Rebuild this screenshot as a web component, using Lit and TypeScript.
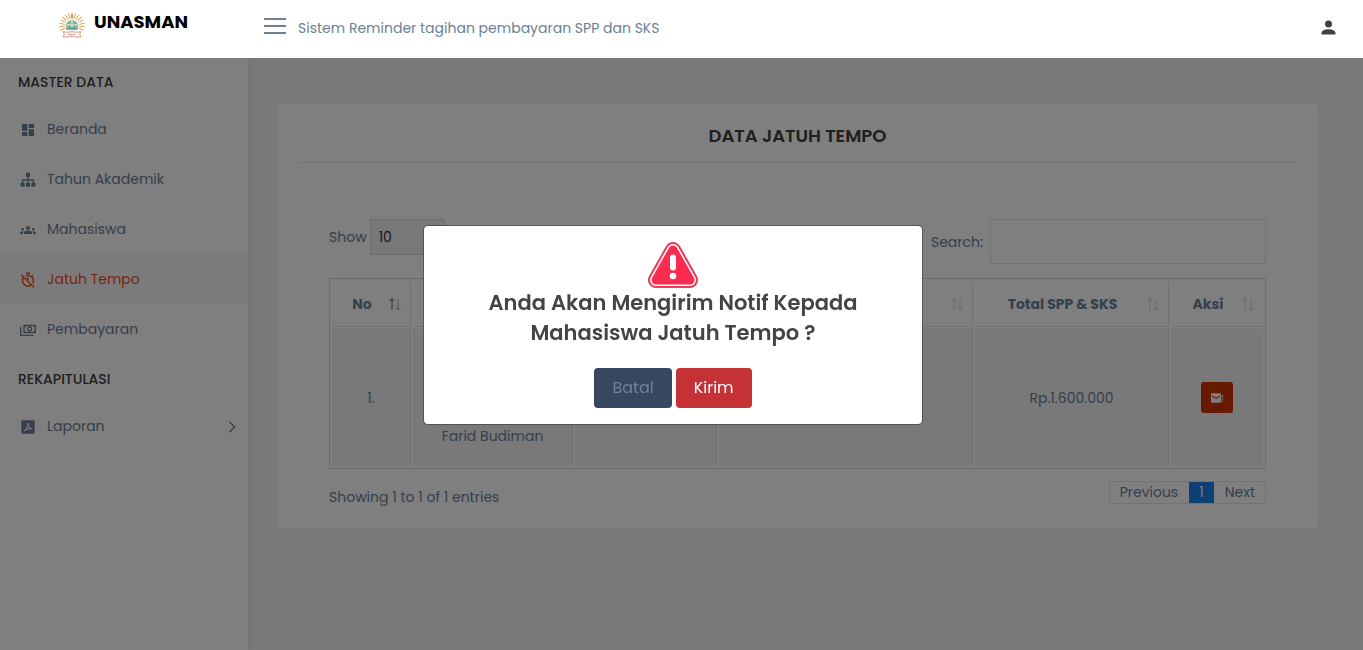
import { LitElement, html, css, svg } from "lit";
import { customElement, state } from "lit/decorators.js";
import { classMap } from "lit/directives/class-map.js";

const icons = {
  dashboard: svg`<path d="M3 13h8V3H3v10zm0 8h8v-6H3v6zm10 0h8V11h-8v10zm0-18v6h8V3h-8z" />`,
  sitemap: svg`<path d="M9 1h6v6h-2v4h8v5h2v6h-6v-6h2v-3h-6v3h2v6H9v-6h2v-3H5v3h2v6H1v-6h2v-5h8V7H9z" />`,
  people: svg`<path d="M12 12.75c1.63 0 3.07.39 4.24.9 1.08.48 1.76 1.56 1.76 2.73V18H6v-1.61c0-1.18.68-2.26 1.76-2.73 1.17-.52 2.61-.91 4.24-.91zM4 13c1.1 0 2-.9 2-2s-.9-2-2-2-2 .9-2 2 .9 2 2 2zm1.13 1.1C4.76 14.04 4.39 14 4 14c-.99 0-1.93.21-2.78.58C.48 14.9 0 15.62 0 16.43V18h4.5v-1.61c0-.83.23-1.61.63-2.29zM20 13c1.1 0 2-.9 2-2s-.9-2-2-2-2 .9-2 2 .9 2 2 2zm4 3.43c0-.81-.48-1.53-1.22-1.85A6.95 6.95 0 0 0 20 14c-.39 0-.76.04-1.13.1.4.68.63 1.46.63 2.29V18H24v-1.57zM12 6c1.66 0 3 1.34 3 3s-1.34 3-3 3-3-1.34-3-3 1.34-3 3-3z" />`,
  timerOff: svg`<g fill="none" stroke="currentColor" stroke-width="2.200"><path d="M9 2h6M12 8v4M18 7l1.800-1.800M2 4l19 19" /><path d="M8.500 5.800A8.200 8.200 0 0 1 19.200 17M5.400 8.300A8.200 8.200 0 0 0 16.800 19.700" /></g>`,
  money: svg`<path fill-rule="evenodd" d="M5 4h19v13H5zM7 8v5a2 2 0 0 1 2 2h11a2 2 0 0 1 2-2V8a2 2 0 0 1-2-2H9a2 2 0 0 1-2 2zM14.500 6.500a4 4 0 1 1 0 8 4 4 0 0 1 0-8zM14.500 8.500a2 2 0 1 0 0 4 2 2 0 0 0 0-4zM0 7h2v12h18v2H0z" />`,
  pdf: svg`<path d="M3 2h18a1 1 0 0 1 1 1v18a1 1 0 0 1-1 1H3a1 1 0 0 1-1-1V3a1 1 0 0 1 1-1z" /><path d="M6 18c3-1 6-7 6-12 0 5 2 8 6 9-4-1-8 0-12 3z" fill="none" stroke="#fff" stroke-width="1.500" />`,
  chevron: svg`<path d="M8 4l8 8-8 8" fill="none" stroke="currentColor" stroke-width="2" />`,
  user: svg`<path d="M12 12a4 4 0 1 0 0-8 4 4 0 0 0 0 8zm0 2c-4 0-8 1.500-8 4.500V20h16v-1.500c0-3-4-4.500-8-4.500z" />`,
};

type IconName = keyof typeof icons;
const icon = (name: IconName) =>
  html`<svg class="icon" viewBox="0 0 24 24" aria-hidden="true">${icons[name]}</svg>`;

const rays = Array.from({ length: 15 }, (_, i) => -112 + i * 16);

const logo = html`<svg class="logo" viewBox="0 0 54 54" aria-hidden="true">
  ${rays.map(
    (a) => svg`<path d="M27 13V4" transform="rotate(${a} 27 28)" fill="none"
      stroke="#e2a65c" stroke-width="2" stroke-linecap="round" />`
  )}
  <path d="M27 4l2 6-2 8-2-8z" fill="#c98a45" />
  <path d="M15 30c0-16 24-16 24 0l-12 4z" fill="#7fb39c" />
  <path d="M27 17v16M17 27c4-2 7-1 10 2 3-3 6-4 10-2" fill="none" stroke="#e9f1dc" stroke-width="2" />
  <path d="M14 32h26l-3 4H17z" fill="#5d9a8a" />
  <path d="M10 40c7 2 10 0 17 0s10 2 17 0l-2 5 2 5c-7 1-10-1-17-1s-10 2-17 1l2-5z"
    fill="#fdf6f2" stroke="#cf8a72" stroke-width="1.600" />
  <path d="M20 45h14" stroke="#b0705c" stroke-width="2" stroke-dasharray="3 1.500" />
</svg>`;

interface NavItem {
  label: string;
  icon: IconName;
  expandable?: boolean;
}

const groups: { title: string; items: NavItem[] }[] = [
  {
    title: "MASTER DATA",
    items: [
      { label: "Beranda", icon: "dashboard" },
      { label: "Tahun Akademik", icon: "sitemap" },
      { label: "Mahasiswa", icon: "people" },
      { label: "Jatuh Tempo", icon: "timerOff" },
      { label: "Pembayaran", icon: "money" },
    ],
  },
  {
    title: "REKAPITULASI",
    items: [{ label: "Laporan", icon: "pdf", expandable: true }],
  },
];

const columns = [
  { label: "No", width: 79, sorted: true },
  { label: "", width: 160 },
  { label: "", width: 142 },
  { label: "", width: 254 },
  { label: "Total SPP & SKS", width: 194 },
  { label: "Aksi", width: 92 },
];

@customElement("app-root")
export class AppRoot extends LitElement {
  @state() private active = "Jatuh Tempo";
  @state() private confirming = true;

  static styles = css`
    :host {
      display: flex;
      flex-direction: column;
      min-height: 100vh;
      font-family: Poppins, Inter, sans-serif;
      font-size: 14px;
      line-height: 22px;
      color: #6b8096;
      background: #f0f4f3;
    }
    * {
      box-sizing: border-box;
    }
    button,
    input,
    select {
      font: inherit;
      color: inherit;
    }
    a {
      color: inherit;
      text-decoration: none;
    }
    .icon {
      display: block;
      width: 16px;
      height: 16px;
      fill: currentColor;
    }

    .topbar {
      position: relative;
      z-index: 20;
      display: flex;
      height: 58px;
      padding-right: 24px;
      background: #fff;
    }
    .brand {
      display: flex;
      align-items: flex-start;
      justify-content: center;
      gap: 8px;
      width: 248px;
      padding: 11px 2px 0 0;
      font-size: 18px;
      font-weight: 700;
      color: #000;
    }
    .logo {
      width: 28px;
      height: 28px;
    }
    .tagline {
      display: flex;
      flex: 1;
      align-items: center;
      gap: 12px;
      padding: 0 0 2px 16px;
    }
    .burger {
      display: flex;
      flex-direction: column;
      gap: 5px;
      width: 22px;
      padding: 0 0 4px;
      border: 0;
      background: none;
    }
    .burger span {
      height: 2px;
      background: #728094;
    }
    .account {
      align-self: center;
      padding: 0 0 3px;
      border: 0;
      background: none;
      color: #404040;
    }
    .account .icon {
      width: 21px;
      height: 21px;
    }

    .layout {
      display: flex;
      flex: 1;
      padding-right: 17px;
    }
    .sidebar {
      width: 248px;
      padding-top: 10px;
      background: #fff;
      box-shadow: 0 0 6px rgba(0, 0, 0, 0.08);
    }
    .group {
      margin: 0;
      padding: 3px 18px 11px;
      font-size: 14px;
      font-weight: 500;
      line-height: 22px;
      color: #404040;
    }
    .nav {
      margin: 0;
      padding: 0 0 11px;
      list-style: none;
    }
    .nav a {
      display: flex;
      align-items: center;
      gap: 11px;
      height: 50px;
      padding: 0 8px 0 20px;
    }
    .nav a span {
      flex: 1;
    }
    .nav .icon {
      height: 18px;
      padding-top: 2px;
    }
    .nav .active {
      background: #f7f7fb;
      color: #f04a14;
    }

    .content {
      flex: 1;
      min-width: 0;
      padding: 45px 29px 30px 30px;
    }
    .card {
      padding: 20px 20px 21px;
      border-radius: 4px;
      background: #fff;
    }
    .card h1 {
      margin: 0;
      padding: 2px 0 15px;
      border-bottom: 1px solid #e0e0e0;
      font-size: 18px;
      font-weight: 600;
      line-height: 22px;
      text-align: center;
      color: #404040;
    }
    .panel {
      padding: 56px 31px 0;
    }
    .tools {
      display: flex;
      align-items: flex-start;
      justify-content: space-between;
      margin-bottom: 14px;
    }
    .tools label {
      display: flex;
      align-items: center;
      gap: 3px;
    }
    .tools .find {
      gap: 7px;
    }
    select {
      width: 75px;
      height: 36px;
      padding: 0 8px;
      border: 1px solid #d4d8dc;
      border-radius: 0;
      appearance: none;
      background: #eff3f2;
      color: #303030;
    }
    input {
      width: 276px;
      height: 45px;
      border: 1px solid #e0e4ea;
      border-radius: 0;
      background: #fff;
    }
    table {
      width: 100%;
      table-layout: fixed;
      border: 1px solid #d6d9de;
      border-collapse: separate;
      border-spacing: 2px;
      text-align: center;
    }
    th,
    td {
      padding: 0;
      border-right: 1px solid #dfe2e6;
      border-bottom: 1px solid #dfe2e6;
    }
    th:last-child,
    td:last-child {
      border-right: 0;
    }
    td {
      height: 137px;
      background: #f2f2f2;
      border-bottom: 0;
    }
    th {
      height: 46px;
      font-weight: 700;
    }
    .head {
      display: flex;
      align-items: center;
      padding: 0 8px 0 4px;
    }
    .head span {
      flex: 1;
    }
    .sort {
      width: 14px;
      height: 14px;
      fill: none;
      stroke: currentColor;
      stroke-width: 2;
      opacity: 0.35;
    }
    .sorted .up {
      stroke: #101820;
    }
    .sorted {
      opacity: 0.7;
    }
    .student {
      padding-bottom: 19px;
      vertical-align: bottom;
    }
    .send {
      display: inline-flex;
      align-items: center;
      justify-content: center;
      width: 32px;
      height: 31px;
      padding: 0;
      border: 0;
      border-radius: 3px;
      background: #cc3600;
      color: #fff;
      vertical-align: middle;
    }
    .foot {
      display: flex;
      align-items: flex-start;
      justify-content: space-between;
      padding-top: 12px;
    }
    .foot p {
      margin: 0;
      padding-top: 5px;
    }
    .pages {
      display: flex;
      gap: 1px;
      border: 1px solid #e4e6ea;
      line-height: 21px;
    }
    .pages a {
      padding: 0 10px;
    }
    .pages .current {
      background: #1a80e6;
      color: #fff;
    }

    .backdrop {
      position: fixed;
      inset: 0;
      z-index: 10;
      background: rgba(0, 0, 0, 0.5);
    }
    .stage {
      position: fixed;
      inset: 0;
      z-index: 30;
      display: flex;
      align-items: center;
      justify-content: center;
      padding-right: 17px;
    }
    .modal {
      width: 500px;
      padding: 16px;
      border: 1px solid rgba(0, 0, 0, 0.3);
      border-radius: 5px;
      background: #fff;
      background-clip: padding-box;
      text-align: center;
    }
    .warn {
      display: block;
      width: 50px;
      height: 46px;
      margin: 0 auto;
    }
    .modal h2 {
      margin: 0 auto 20px;
      padding: 0 40px;
      font-size: 21px;
      font-weight: 600;
      line-height: 30px;
      color: #444;
    }
    .actions {
      display: flex;
      justify-content: center;
      gap: 4px;
    }
    .actions button {
      height: 40px;
      padding: 0 18px;
      border: 0;
      border-radius: 4px;
      background: #36475f;
      color: #728094;
      font-size: 16px;
    }
    .actions .confirm {
      background: #c43235;
      color: #fff;
    }
  `;

  private renderSort(sorted = false) {
    return html`<svg class=${classMap({ sort: true, sorted })} viewBox="0 0 28 28" aria-hidden="true">
      <path class="up" d="M8 26V3M3 8l5-5 5 5" />
      <path d="M20 4v22M15 21l5 5 5-5" />
    </svg>`;
  }

  private renderModal() {
    return html`<div class="backdrop"></div>
      <div class="stage">
        <div class="modal" role="dialog" aria-modal="true" aria-labelledby="ask">
          <svg class="warn" viewBox="0 0 100 92" aria-hidden="true">
            <path d="M50 16L16 76H84Z" fill="#ee3a57" stroke="#ee3a57" stroke-width="32" stroke-linejoin="round" />
            <path d="M50 16L16 76H84Z" fill="#fb2c51" stroke="#fff" stroke-width="24" stroke-linejoin="round" />
            <path d="M50 16L16 76H84Z" fill="#fb2c51" stroke="#fb2c51" stroke-width="18" stroke-linejoin="round" />
            <path d="M50 31V51" stroke="#fff" stroke-width="12" stroke-linecap="round" />
            <circle cx="50" cy="68" r="6.500" fill="#fff" />
          </svg>
          <h2 id="ask">Anda Akan Mengirim Notif Kepada Mahasiswa Jatuh Tempo ?</h2>
          <div class="actions">
            <button @click=${() => (this.confirming = false)}>Batal</button>
            <button class="confirm" @click=${() => (this.confirming = false)}>Kirim</button>
          </div>
        </div>
      </div>`;
  }

  render() {
    return html`
      <header class="topbar">
        <a class="brand" href="#">${logo}<span>UNASMAN</span></a>
        <div class="tagline">
          <button class="burger" aria-label="Menu"><span></span><span></span><span></span></button>
          <span>Sistem Reminder tagihan pembayaran SPP dan SKS</span>
        </div>
        <button class="account" aria-label="Akun">${icon("user")}</button>
      </header>
      <div class="layout">
        <nav class="sidebar">
          ${groups.map(
            (g) => html`<h3 class="group">${g.title}</h3>
              <ul class="nav">
                ${g.items.map(
                  (item) => html`<li>
                    <a
                      href="#"
                      class=${classMap({ active: item.label === this.active })}
                      @click=${() => (this.active = item.label)}
                      >${icon(item.icon)}<span>${item.label}</span>${item.expandable ? icon("chevron") : null}</a
                    >
                  </li>`
                )}
              </ul>`
          )}
        </nav>
        <main class="content">
          <section class="card">
            <h1>DATA JATUH TEMPO</h1>
            <div class="panel">
              <div class="tools">
                <label>Show <select><option>10</option></select></label>
                <label class="find">Search: <input type="search" /></label>
              </div>
              <table>
                <colgroup>
                  ${columns.map((c) => html`<col style="width:${c.width}px" />`)}
                </colgroup>
                <thead>
                  <tr>
                    ${columns.map(
                      (c) => html`<th scope="col">
                        <div class="head"><span>${c.label}</span>${this.renderSort(c.sorted)}</div>
                      </th>`
                    )}
                  </tr>
                </thead>
                <tbody>
                  <tr>
                    <td>1.</td>
                    <td class="student">Farid Budiman</td>
                    <td></td>
                    <td></td>
                    <td>Rp.1.600.000</td>
                    <td>
                      <button class="send" aria-label="Kirim" @click=${() => (this.confirming = true)}>
                        <svg class="icon" viewBox="0 0 24 24" aria-hidden="true">
                          <path fill-rule="evenodd" d="M4 5h13a1 1 0 0 1 1 1v12a1 1 0 0 1-1 1H4a1 1 0 0 1-1-1V6a1 1 0 0 1 1-1zM4.500 8v1.800l6 4 6-4V8l-6 4zM19 8h2v3h-2zM19 12.500h2v2h-2zM19 16h2v2h-2z" />
                        </svg>
                      </button>
                    </td>
                  </tr>
                </tbody>
              </table>
              <div class="foot">
                <p>Showing 1 to 1 of 1 entries</p>
                <div class="pages">
                  <a href="#">Previous</a><a href="#" class="current">1</a><a href="#">Next</a>
                </div>
              </div>
            </div>
          </section>
        </main>
      </div>
      ${this.confirming ? this.renderModal() : null}
    `;
  }
}
